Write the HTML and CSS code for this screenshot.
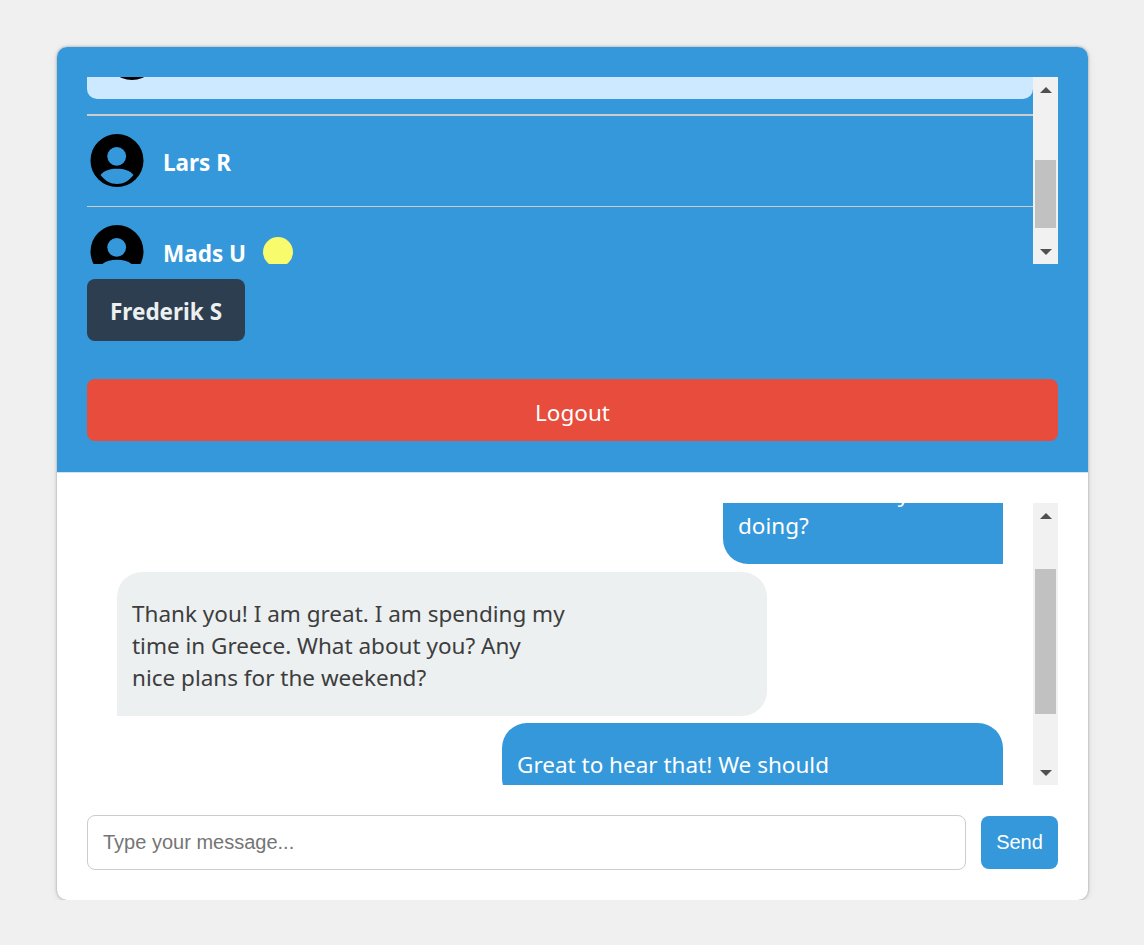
FILE: index.html
```html
<!DOCTYPE html>
<html lang="en">
<head>
    <meta charset="UTF-8">
    <meta name="viewport" content="width=device-width, initial-scale=1.0">
    <title>Chat</title>
    <link rel="stylesheet" href="styles.css">
</head>
<body>
    <div class="container">
        <div class="sidebar">
            <div class="scroll-box user-box">
                <ul class="user-list">
                    <li class="user-item first">
                        <div class="selected-user">
                            <svg class="avatar" viewBox="0 0 54 54"><circle cx="27" cy="26.5" r="26.5" fill="#000"/><circle class="cut" cx="26.7" cy="22.3" r="9.4"/><path class="cut" d="M10.5 41C14 36.500 20 34.800 27 34.800S40 36.500 43.500 41C39 46.800 33.500 50 27 50S15 46.800 10.500 41Z"/></svg>
                        </div>
                    </li>
                    <li class="user-item">
                        <svg class="avatar" viewBox="0 0 54 54"><circle cx="27" cy="26.5" r="26.5" fill="#000"/><circle class="cut" cx="26.7" cy="22.3" r="9.4"/><path class="cut" d="M10.5 41C14 36.500 20 34.800 27 34.800S40 36.500 43.500 41C39 46.800 33.500 50 27 50S15 46.800 10.500 41Z"/></svg>
                        <span class="user-name">Lars R</span>
                    </li>
                    <li class="user-item">
                        <svg class="avatar" viewBox="0 0 54 54"><circle cx="27" cy="26.5" r="26.5" fill="#000"/><circle class="cut" cx="26.7" cy="22.3" r="9.4"/><path class="cut" d="M10.5 41C14 36.500 20 34.800 27 34.800S40 36.500 43.500 41C39 46.800 33.500 50 27 50S15 46.800 10.500 41Z"/></svg>
                        <span class="user-name">Mads U</span>
                        <span class="unread-dot"></span>
                    </li>
                </ul>
                <div class="scrollbar">
                    <div class="arrow"><span class="arrow-up"></span></div>
                    <div class="track"><div class="thumb thumb-users"></div></div>
                    <div class="arrow"><span class="arrow-down"></span></div>
                </div>
            </div>
            <button class="current-user-btn">Frederik S</button>
            <button class="logout-btn">Logout</button>
        </div>

        <div class="chat">
            <div class="scroll-box message-box">
                <div class="message-list">
                    <div class="message sent first-message">Hello! How are you<br>doing?</div>
                    <div class="message received">Thank you! I am great. I am spending my<br>time in Greece. What about you? Any<br>nice plans for the weekend?</div>
                    <div class="message sent last-message">Great to hear that! We should</div>
                </div>
                <div class="scrollbar">
                    <div class="arrow"><span class="arrow-up"></span></div>
                    <div class="track"><div class="thumb thumb-messages"></div></div>
                    <div class="arrow"><span class="arrow-down"></span></div>
                </div>
            </div>
            <div class="input-row">
                <input type="text" class="message-input" placeholder="Type your message...">
                <button class="send-btn">Send</button>
            </div>
        </div>
    </div>
</body>
</html>
```

FILE: styles.css
```css
* {
    box-sizing: border-box;
}
body {
    margin: 0;
    padding: 47px 0 0;
    background-color: #f0f0f0;
    font-family: "Noto Sans", "Open Sans", sans-serif;
}
.container {
    width: 1031px;
    margin: 0 56px 0 57px;
    background-color: white;
    border-radius: 10px;
    box-shadow: 0 0 3px rgba(0, 0, 0, 0.35), 0 2px 10px rgba(0, 0, 0, 0.08);
    overflow: hidden;
}
.sidebar {
    background-color: #3498db;
    padding: 30px 30px 31px;
    border-bottom: 1px solid #cfe3f1;
}
.scroll-box {
    display: flex;
    overflow: hidden;
}
.user-box {
    height: 187px;
}
.user-list {
    flex: 1;
    list-style: none;
    margin: -68px 0 0;
    padding: 0;
}
.user-item {
    display: flex;
    align-items: center;
    height: 91px;
    padding: 0 3px;
    border-bottom: 1px solid #ccc;
}
.user-item.first {
    display: block;
    height: 107px;
    padding: 0 0 15px;
    border-bottom-width: 2px;
}
.selected-user {
    height: 90px;
    padding: 18px;
    background-color: #cce9ff;
    border-radius: 0 0 10px 10px;
}
.avatar {
    display: block;
    width: 54px;
    height: 54px;
    flex-shrink: 0;
}
.cut {
    fill: #3498db;
}
.user-name {
    margin-left: 19px;
    padding-top: 2px;
    color: white;
    font-size: 22.5px;
    font-weight: bold;
}
.unread-dot {
    width: 30px;
    height: 30px;
    margin-left: 17px;
    background-color: #f8fb6b;
    border-radius: 50%;
}
.scrollbar {
    display: flex;
    flex-direction: column;
    width: 25px;
    flex-shrink: 0;
    background-color: #f1f1f1;
}
.arrow {
    display: flex;
    align-items: center;
    justify-content: center;
    height: 25px;
}
.arrow-up {
    border-left: 6px solid transparent;
    border-right: 6px solid transparent;
    border-bottom: 6px solid #505050;
}
.arrow-down {
    border-left: 6px solid transparent;
    border-right: 6px solid transparent;
    border-top: 6px solid #505050;
}
.track {
    flex: 1;
    padding: 0 2px;
}
.thumb {
    background-color: #c1c1c1;
}
.thumb-users {
    height: 68px;
    margin-top: 58px;
}
.thumb-messages {
    height: 145px;
    margin-top: 41px;
}
.current-user-btn {
    display: block;
    height: 62px;
    margin-top: 15px;
    padding: 2px 23px 0;
    background-color: #2c3e50;
    color: #ecf0f1;
    border: none;
    border-radius: 8px;
    font-family: inherit;
    font-size: 22.5px;
    font-weight: bold;
}
.logout-btn {
    display: block;
    width: 100%;
    height: 62px;
    margin-top: 38px;
    padding: 4px 0 0;
    background-color: #e74c3c;
    color: white;
    border: none;
    border-radius: 8px;
    font-family: inherit;
    font-size: 22.5px;
}
.chat {
    padding: 30px;
}
.message-box {
    height: 282px;
}
.message-list {
    flex: 1;
    display: flex;
    flex-direction: column;
    margin-top: -51px;
    padding: 0 30px;
}
.message {
    flex-shrink: 0;
    padding: 26px 15px 22px;
    font-size: 22.5px;
    line-height: 32px;
}
.sent {
    align-self: flex-end;
    background-color: #3498db;
    color: white;
}
.received {
    align-self: flex-start;
    width: 650px;
    margin: 8px 0 7px;
    background-color: #ecf0f1;
    color: #3d3d3d;
    border-radius: 25px 25px 25px 0;
}
.first-message {
    width: 280px;
    border-radius: 25px 25px 0 25px;
}
.last-message {
    width: 501px;
    border-radius: 25px 25px 0 25px;
}
.input-row {
    display: flex;
    align-items: center;
    gap: 15px;
    margin-top: 30px;
}
.message-input {
    flex: 1;
    height: 55px;
    padding: 0 15px;
    border: 1px solid #ccc;
    border-radius: 8px;
    font-family: "Liberation Sans", Arial, sans-serif;
    font-size: 20px;
}
.send-btn {
    width: 77px;
    height: 53px;
    background-color: #3498db;
    color: white;
    border: none;
    border-radius: 8px;
    font-family: "Liberation Sans", Arial, sans-serif;
    font-size: 20px;
}
```
